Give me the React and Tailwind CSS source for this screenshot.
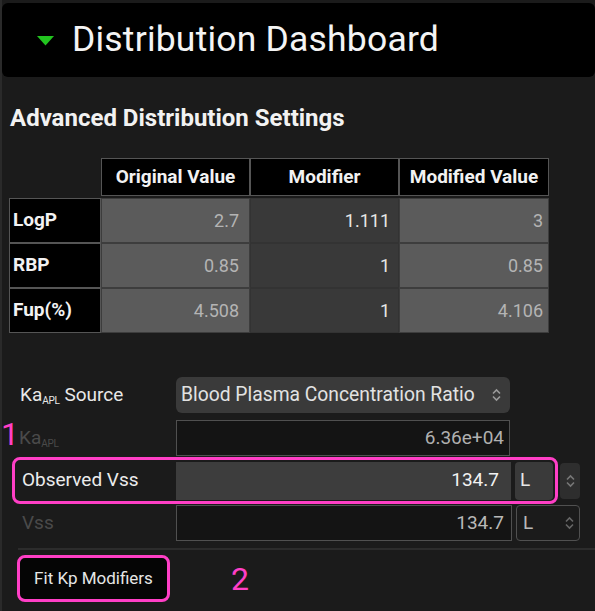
import React from 'react';

const PINK = '#ff3fc6';

const UpDown = ({ className = '' }) => (
  <svg width="9" height="14" viewBox="0 0 9 14" className={className}>
    <path d="M1 5.5 L4.5 2 L8 5.5" fill="none" stroke="currentColor" strokeWidth="1.6" />
    <path d="M1 8.5 L4.5 12 L8 8.5" fill="none" stroke="currentColor" strokeWidth="1.6" />
  </svg>
);

const rows = [
  { label: 'LogP', orig: '2.7', mod: '1.111', modded: '3' },
  { label: 'RBP', orig: '0.85', mod: '1', modded: '0.85' },
  { label: 'Fup(%)', orig: '4.508', mod: '1', modded: '4.106' },
];

const Sub = ({ children }) => <span className="text-[10px] align-[-3px] tracking-tight">{children}</span>;

const App = () => {
  return (
    <div
      className="w-[595px] h-[611px] bg-[#1b1b1b] overflow-hidden border-l-2 border-[#2a2a2a] relative"
      style={{ fontFamily: 'Roboto, "Liberation Sans", sans-serif' }}
    >
      {/* header bar */}
      <div className="mt-[3px] h-[74px] bg-black rounded-md flex items-center">
        <svg width="17" height="10" viewBox="0 0 17 10" className="ml-[35px] mt-[2px]">
          <polygon points="0,0 17,0 8.5,9.5" fill="#22c41f" />
        </svg>
        <h1 className="ml-[18px] text-[35.5px] leading-none text-[#f4f4f4] tracking-[0.2px]">Distribution Dashboard</h1>
      </div>

      <h2 className="mt-[26px] ml-[8px] text-[24px] font-bold text-[#f2f2f2] leading-[30px]">
        Advanced Distribution Settings
      </h2>

      {/* table */}
      <div className="mt-[25px] ml-[7px] grid grid-cols-[92px_149px_149px_150px] text-[18px]">
        <div />
        {['Original Value', 'Modifier', 'Modified Value'].map((h) => (
          <div
            key={h}
            className="h-[38px] bg-black border border-[#555] flex items-center justify-center text-[19px] font-bold text-[#f2f2f2]"
          >
            {h}
          </div>
        ))}
        <div className="col-span-4 h-[2px]" />
        {rows.map((r) => (
          <React.Fragment key={r.label}>
            <div className="h-[45px] bg-black border border-[#555] flex items-center pl-[3px] text-[19px] font-bold text-[#f2f2f2]">
              {r.label}
            </div>
            <div className="h-[45px] bg-[#5b5b5b] border border-[#3d3d3d] flex items-center justify-end pr-[10px] text-[#b4b4b4]">
              {r.orig}
            </div>
            <div className="h-[45px] bg-[#393939] border border-[#333] flex items-center justify-end pr-[8px] text-[#e6e6e6]">
              {r.mod}
            </div>
            <div className="h-[45px] bg-[#5b5b5b] border border-[#3d3d3d] flex items-center justify-end pr-[5px] text-[#b4b4b4]">
              {r.modded}
            </div>
          </React.Fragment>
        ))}
      </div>

      {/* form */}
      <div className="mt-[44px] text-[19px]">
        <div className="flex items-center h-[36px]">
          <div className="w-[174px] pl-[18px] text-[#e8e8e8]">
            Ka<Sub>APL</Sub> Source
          </div>
          <div className="w-[334px] h-[36px] bg-[#3a3a3a] rounded-md flex items-center justify-between pl-[5px] pr-[9px] text-[19.3px] text-[#e2e2e2]">
            <span>Blood Plasma Concentration Ratio</span>
            <UpDown className="text-[#9a9a9a]" />
          </div>
        </div>

        <div className="flex items-center h-[36px] mt-[7px]">
          <div className="w-[174px] flex items-center">
            <span className="text-[32px] leading-none text-[#ff3fc6] w-[18px] -ml-[1px] mt-[-8px]">1</span>
            <span className="text-[#4a4a4a]">
              Ka<Sub>APL</Sub>
            </span>
          </div>
          <div className="w-[334px] h-[36px] border border-[#505050] bg-[#141414] flex items-center justify-end pr-[5px] text-[#b0b0b0]">
            6.36e+04
          </div>
        </div>

        <div className="flex items-center mt-[1px]">
          <div
            className="ml-[10px] w-[546px] h-[47px] rounded-lg border-[3px] flex items-center"
            style={{ borderColor: PINK }}
          >
            <div className="w-[161px] pl-[7px] text-[#ececec]">Observed Vss</div>
            <div className="w-[335px] h-[38px] bg-[#3d3d3d] flex items-center justify-end pr-[12px] text-[#f2f2f2]">
              134.7
            </div>
            <div className="ml-[4px] w-[38px] h-[38px] bg-[#3a3a3a] rounded-sm flex items-center pl-[5px] text-[#e6e6e6]">
              L
            </div>
          </div>
          <div className="ml-[2px] w-[20px] h-[36px] bg-[#2e2e2e] rounded-sm flex items-center justify-center text-[#777]">
            <UpDown />
          </div>
        </div>

        <div className="flex items-center h-[36px] mt-[1px]">
          <div className="w-[174px] pl-[20px] text-[#4a4a4a]">Vss</div>
          <div className="w-[336px] h-[36px] border border-[#505050] bg-[#141414] flex items-center justify-end pr-[7px] text-[#b8b8b8]">
            134.7
          </div>
          <div className="ml-[4px] w-[64px] h-[36px] border border-[#505050] rounded-sm flex items-center justify-between pl-[6px] pr-[5px] text-[#b8b8b8]">
            <span>L</span>
            <UpDown className="text-[#666]" />
          </div>
        </div>

        <div className="mt-[7px] ml-[16px] h-[2px] bg-[#2c2c2c]" />

        <div className="flex items-center mt-[5px]">
          <div
            className="ml-[15px] w-[153px] h-[47px] rounded-lg border-[3px] bg-[#050505] flex items-center justify-center text-[17px] text-[#e6e6e6]"
            style={{ borderColor: PINK }}
          >
            Fit Kp Modifiers
          </div>
          <span className="ml-[61px] text-[32px] leading-none" style={{ color: PINK }}>
            2
          </span>
        </div>
      </div>
    </div>
  );
};

export default App;
